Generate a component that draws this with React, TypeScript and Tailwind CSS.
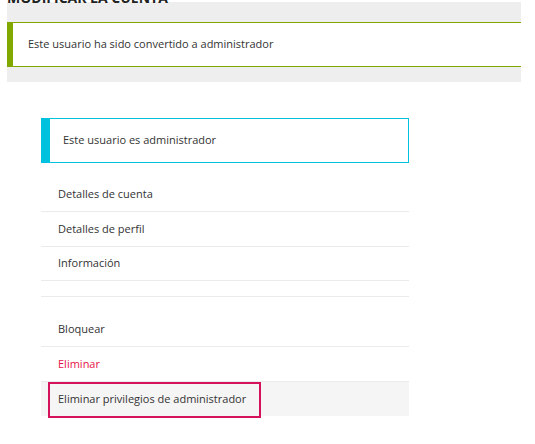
import React from "react";

const rows = ["Detalles de cuenta", "Detalles de perfil", "Información"];

export default function App() {
  return (
    <div className="min-h-screen bg-white font-['Open_Sans',sans-serif] text-[11px] text-[#333]">
      {/* Panel superior */}
      <div className="ml-[7px] mt-[2px] w-[514px] bg-[#eeeeee] pb-[15px] flex flex-col">
        <h2 className="-mt-[11px] h-[14px] text-[14px] leading-[14px] font-bold uppercase text-[#222]">
          Modificar la cuenta
        </h2>
        <div className="mt-[17px] h-[45px] flex items-center bg-white border-y border-l-[6px] border-[#80a800] pl-[15px]">
          Este usuario ha sido convertido a administrador
        </div>
      </div>

      {/* Acciones */}
      <div className="ml-[41px] mt-[36px] w-[368px]">
        <div className="h-[45px] flex items-center border border-l-[9px] border-[#00c1de] pl-[13px]">
          Este usuario es administrador
        </div>

        <ul className="mt-[14px]">
          {rows.map((r, i) => (
            <li
              key={r}
              className={`${i === 2 ? "h-[34px]" : "h-[35px]"} flex items-center border-b border-[#ebebeb] pl-[17px]`}
            >
              {r}
            </li>
          ))}
        </ul>
        <div className="h-[16px] border-b border-[#ebebeb]" />

        <ul className="mt-[15px]">
          <li className="h-[35px] flex items-center border-b border-[#ebebeb] pl-[17px]">Bloquear</li>
          <li className="h-[35px] flex items-center border-b border-[#ebebeb] pl-[17px] text-[#e8124a]">
            Eliminar
          </li>
          <li className="relative h-[34px] flex items-center bg-[#f5f5f5] pl-[17px]">
            Eliminar privilegios de administrador
            <span className="absolute left-[7px] top-0 w-[213px] h-[36px] border-2 border-[#d4115a]" />
          </li>
        </ul>
      </div>
    </div>
  );
}
